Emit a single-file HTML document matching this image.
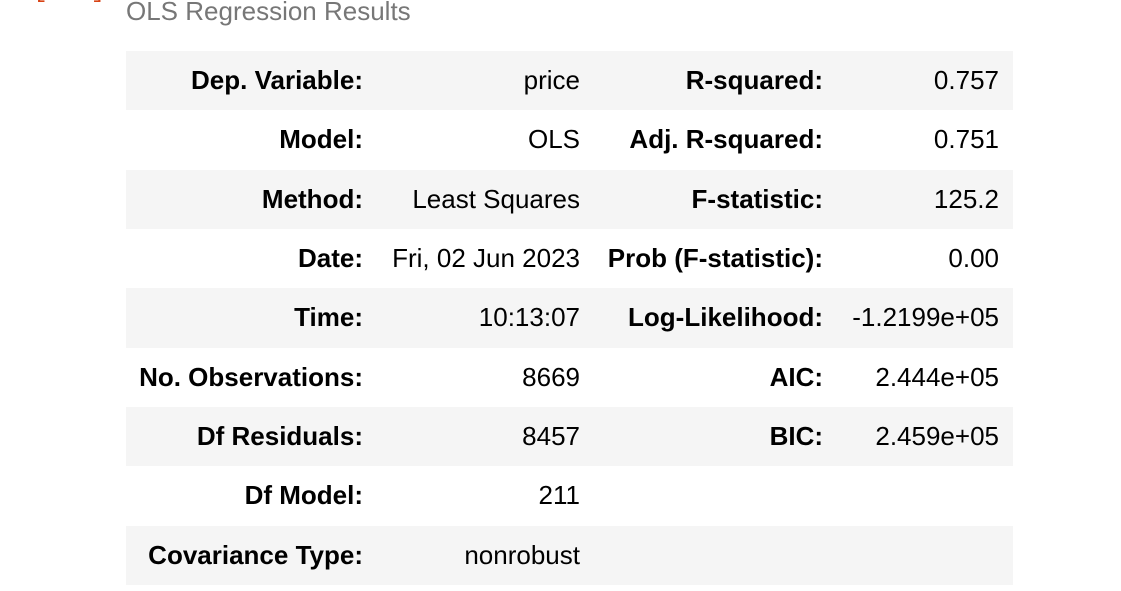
<!DOCTYPE html>
<html><head><style>
body{margin:0;background:#fff;font-family:"Liberation Sans",Arial,sans-serif;width:1121px;height:591px;overflow:hidden;position:relative}
.out{position:absolute;left:-10px;top:-22px;color:#d84315;font-family:"Liberation Mono",monospace;font-size:24px}
.title{position:absolute;left:126px;top:-4px;color:#777;font-size:26px;line-height:30px}
table{position:absolute;left:126px;top:51px;width:887px;border-collapse:collapse;font-size:26px;color:#000;table-layout:fixed}
td{height:59.33px;padding:0;text-align:right;white-space:nowrap}
tr:nth-child(odd){background:#f5f5f5}
td.l{font-weight:bold}
</style></head><body>
<div class="out">Out[105]:</div>
<div class="title">OLS Regression Results</div>
<table>
<colgroup><col style="width:237px"><col style="width:217px"><col style="width:243px"><col style="width:176px"><col style="width:14px"></colgroup>
<tr><td class="l">Dep. Variable:</td><td>price</td><td class="l">R-squared:</td><td>0.757</td><td></td></tr>
<tr><td class="l">Model:</td><td>OLS</td><td class="l">Adj. R-squared:</td><td>0.751</td><td></td></tr>
<tr><td class="l">Method:</td><td>Least Squares</td><td class="l">F-statistic:</td><td>125.2</td><td></td></tr>
<tr><td class="l">Date:</td><td>Fri, 02 Jun 2023</td><td class="l">Prob (F-statistic):</td><td>0.00</td><td></td></tr>
<tr><td class="l">Time:</td><td>10:13:07</td><td class="l">Log-Likelihood:</td><td>-1.2199e+05</td><td></td></tr>
<tr><td class="l">No. Observations:</td><td>8669</td><td class="l">AIC:</td><td>2.444e+05</td><td></td></tr>
<tr><td class="l">Df Residuals:</td><td>8457</td><td class="l">BIC:</td><td>2.459e+05</td><td></td></tr>
<tr><td class="l">Df Model:</td><td>211</td><td></td><td></td><td></td></tr>
<tr><td class="l">Covariance Type:</td><td>nonrobust</td><td></td><td></td><td></td></tr>
</table>
</body></html>
